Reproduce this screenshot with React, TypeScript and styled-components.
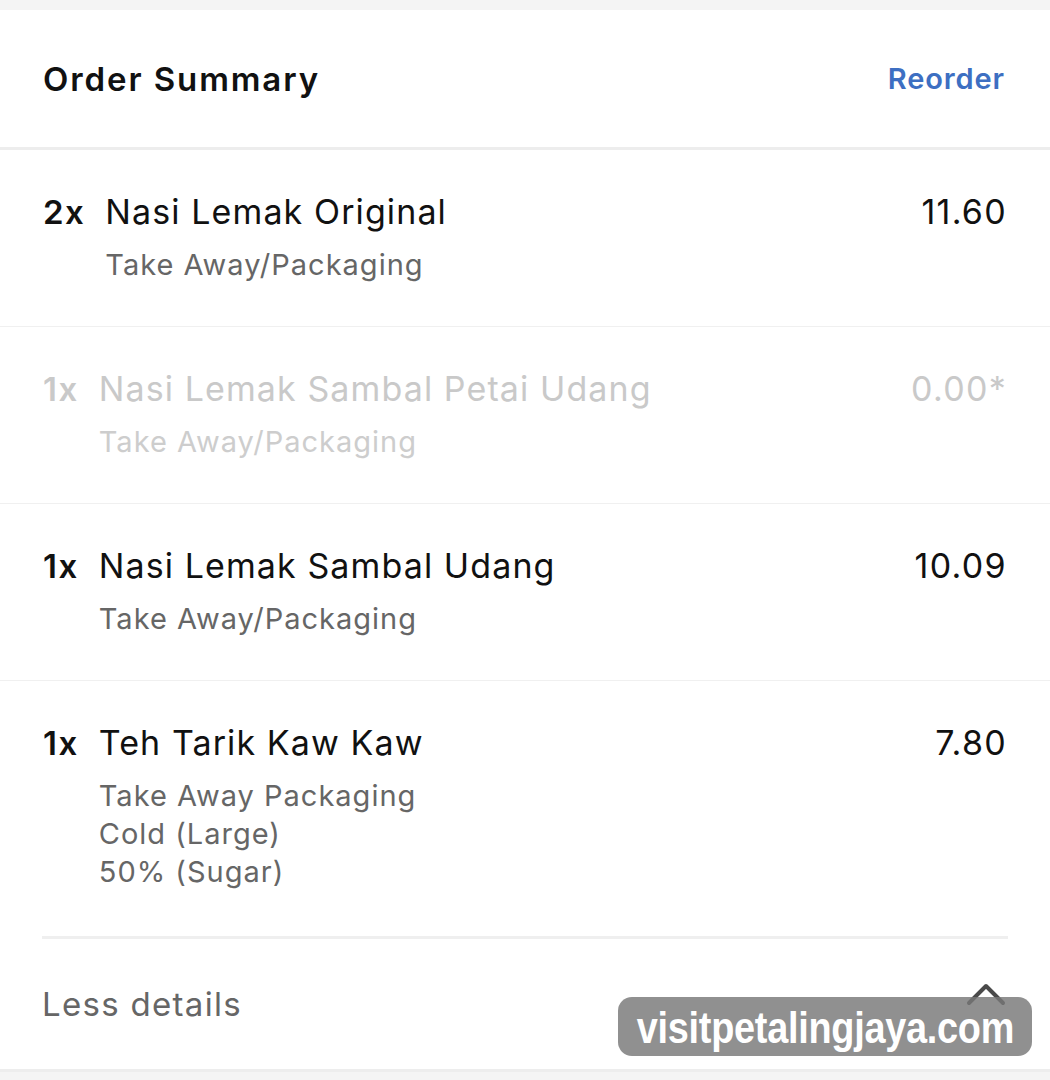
import React from "react";
import styled, { createGlobalStyle } from "styled-components";

interface OrderItem {
  qty: number;
  name: string;
  price: string;
  options: string[];
  disabled?: boolean;
}

const items: OrderItem[] = [
  { qty: 2, name: "Nasi Lemak Original", price: "11.60", options: ["Take Away/Packaging"] },
  {
    qty: 1,
    name: "Nasi Lemak Sambal Petai Udang",
    price: "0.00*",
    options: ["Take Away/Packaging"],
    disabled: true,
  },
  { qty: 1, name: "Nasi Lemak Sambal Udang", price: "10.09", options: ["Take Away/Packaging"] },
  {
    qty: 1,
    name: "Teh Tarik Kaw Kaw",
    price: "7.80",
    options: ["Take Away Packaging", "Cold (Large)", "50% (Sugar)"],
  },
];

const GlobalStyle = createGlobalStyle`
  html, body {
    margin: 0;
    padding: 0;
    background: #f4f4f4;
    font-family: Inter, "Noto Sans", sans-serif;
    -webkit-font-smoothing: antialiased;
  }
`;

const Page = styled.div`
  position: relative;
  width: 1050px;
  height: 1080px;
  padding-top: 10px;
  box-sizing: border-box;
  background: #f4f4f4;
  overflow: hidden;
`;

const Card = styled.div`
  background: #fff;
  height: 1070px;
  display: flex;
  flex-direction: column;
`;

const Header = styled.div`
  height: 140px;
  flex-shrink: 0;
  display: flex;
  align-items: center;
  justify-content: space-between;
  padding: 0 45px 0 43px;
  border-bottom: 3px solid #ededed;
  box-sizing: border-box;
`;

const Title = styled.h2`
  margin: 0;
  font-size: 33px;
  font-weight: 600;
  color: #111;
  letter-spacing: 1.9px;
`;

const Reorder = styled.a`
  font-size: 29px;
  font-weight: 600;
  color: #3d6fc2;
  text-decoration: none;
  letter-spacing: 0.9px;
`;

const Row = styled.div<{ $last?: boolean }>`
  flex-shrink: 0;
  display: flex;
  align-items: flex-start;
  padding: 40px 44px 0 43px;
  height: ${(p) => (p.$last ? "255px" : "177px")};
  box-sizing: border-box;
  border-bottom: ${(p) => (p.$last ? "none" : "1px solid #f0f0f0")};
`;

const Qty = styled.span<{ $muted?: boolean }>`
  font-size: 33px;
  font-weight: 600;
  line-height: 44px;
  letter-spacing: 1.5px;
  color: ${(p) => (p.$muted ? "#c9c9c9" : "#111")};
  margin-right: 20px;
`;

const Body = styled.div`
  flex: 1;
  display: flex;
  flex-direction: column;
`;

const Name = styled.div<{ $muted?: boolean }>`
  font-size: 34px;
  line-height: 44px;
  letter-spacing: 1.1px;
  color: ${(p) => (p.$muted ? "#c9c9c9" : "#111")};
  margin-bottom: 12px;
`;

const Option = styled.div<{ $muted?: boolean }>`
  font-size: 29px;
  line-height: 38px;
  letter-spacing: 1px;
  color: ${(p) => (p.$muted ? "#cdcdcd" : "#666")};
`;

const Price = styled.span<{ $muted?: boolean }>`
  font-size: 34px;
  line-height: 44px;
  letter-spacing: 1.3px;
  margin-right: -1px;
  color: ${(p) => (p.$muted ? "#c9c9c9" : "#111")};
`;

const Footer = styled.div`
  flex-shrink: 0;
  margin: 0 42px;
  border-top: 3px solid #efefef;
  height: 133px;
  display: flex;
  align-items: center;
  justify-content: space-between;
  box-sizing: border-box;
`;

const LessText = styled.span`
  font-size: 33px;
  color: #666;
  letter-spacing: 1.3px;
`;

const Chevron = styled.svg`
  width: 40px;
  height: 24px;
  margin: 0 2px 20px 0;
`;

const BottomStrip = styled.div`
  flex: 1;
  border-top: 3px solid #ededed;
  background: #f4f4f4;
`;

const Watermark = styled.div`
  position: absolute;
  left: 618px;
  top: 997px;
  width: 414px;
  height: 59px;
  border-radius: 14px;
  background: rgba(120, 120, 120, 0.82);
  display: flex;
  align-items: center;
  justify-content: center;
  overflow: hidden;
`;

const WatermarkText = styled.span`
  display: inline-block;
  color: #fff;
  font-family: "Liberation Sans", Arial, sans-serif;
  font-weight: 700;
  font-size: 44px;
  letter-spacing: -0.3px;
  transform: scaleX(0.86);
  white-space: nowrap;
  margin-top: 2px;
`;

const App: React.FC = () => (
  <Page>
    <GlobalStyle />
    <Card>
      <Header>
        <Title>Order Summary</Title>
        <Reorder href="#">Reorder</Reorder>
      </Header>
      {items.map((item, i) => (
        <Row key={i} $last={i === items.length - 1}>
          <Qty $muted={item.disabled}>{item.qty}x</Qty>
          <Body>
            <Name $muted={item.disabled}>{item.name}</Name>
            {item.options.map((o) => (
              <Option key={o} $muted={item.disabled}>
                {o}
              </Option>
            ))}
          </Body>
          <Price $muted={item.disabled}>{item.price}</Price>
        </Row>
      ))}
      <Footer>
        <LessText>Less details</LessText>
        <Chevron viewBox="0 0 40 24" fill="none">
          <path d="M3 21 L20 4 L37 21" stroke="#4a4a4a" strokeWidth="4" strokeLinecap="round" strokeLinejoin="round" />
        </Chevron>
      </Footer>
      <BottomStrip />
    </Card>
    <Watermark>
      <WatermarkText>visitpetalingjaya.com</WatermarkText>
    </Watermark>
  </Page>
);

export default App;
